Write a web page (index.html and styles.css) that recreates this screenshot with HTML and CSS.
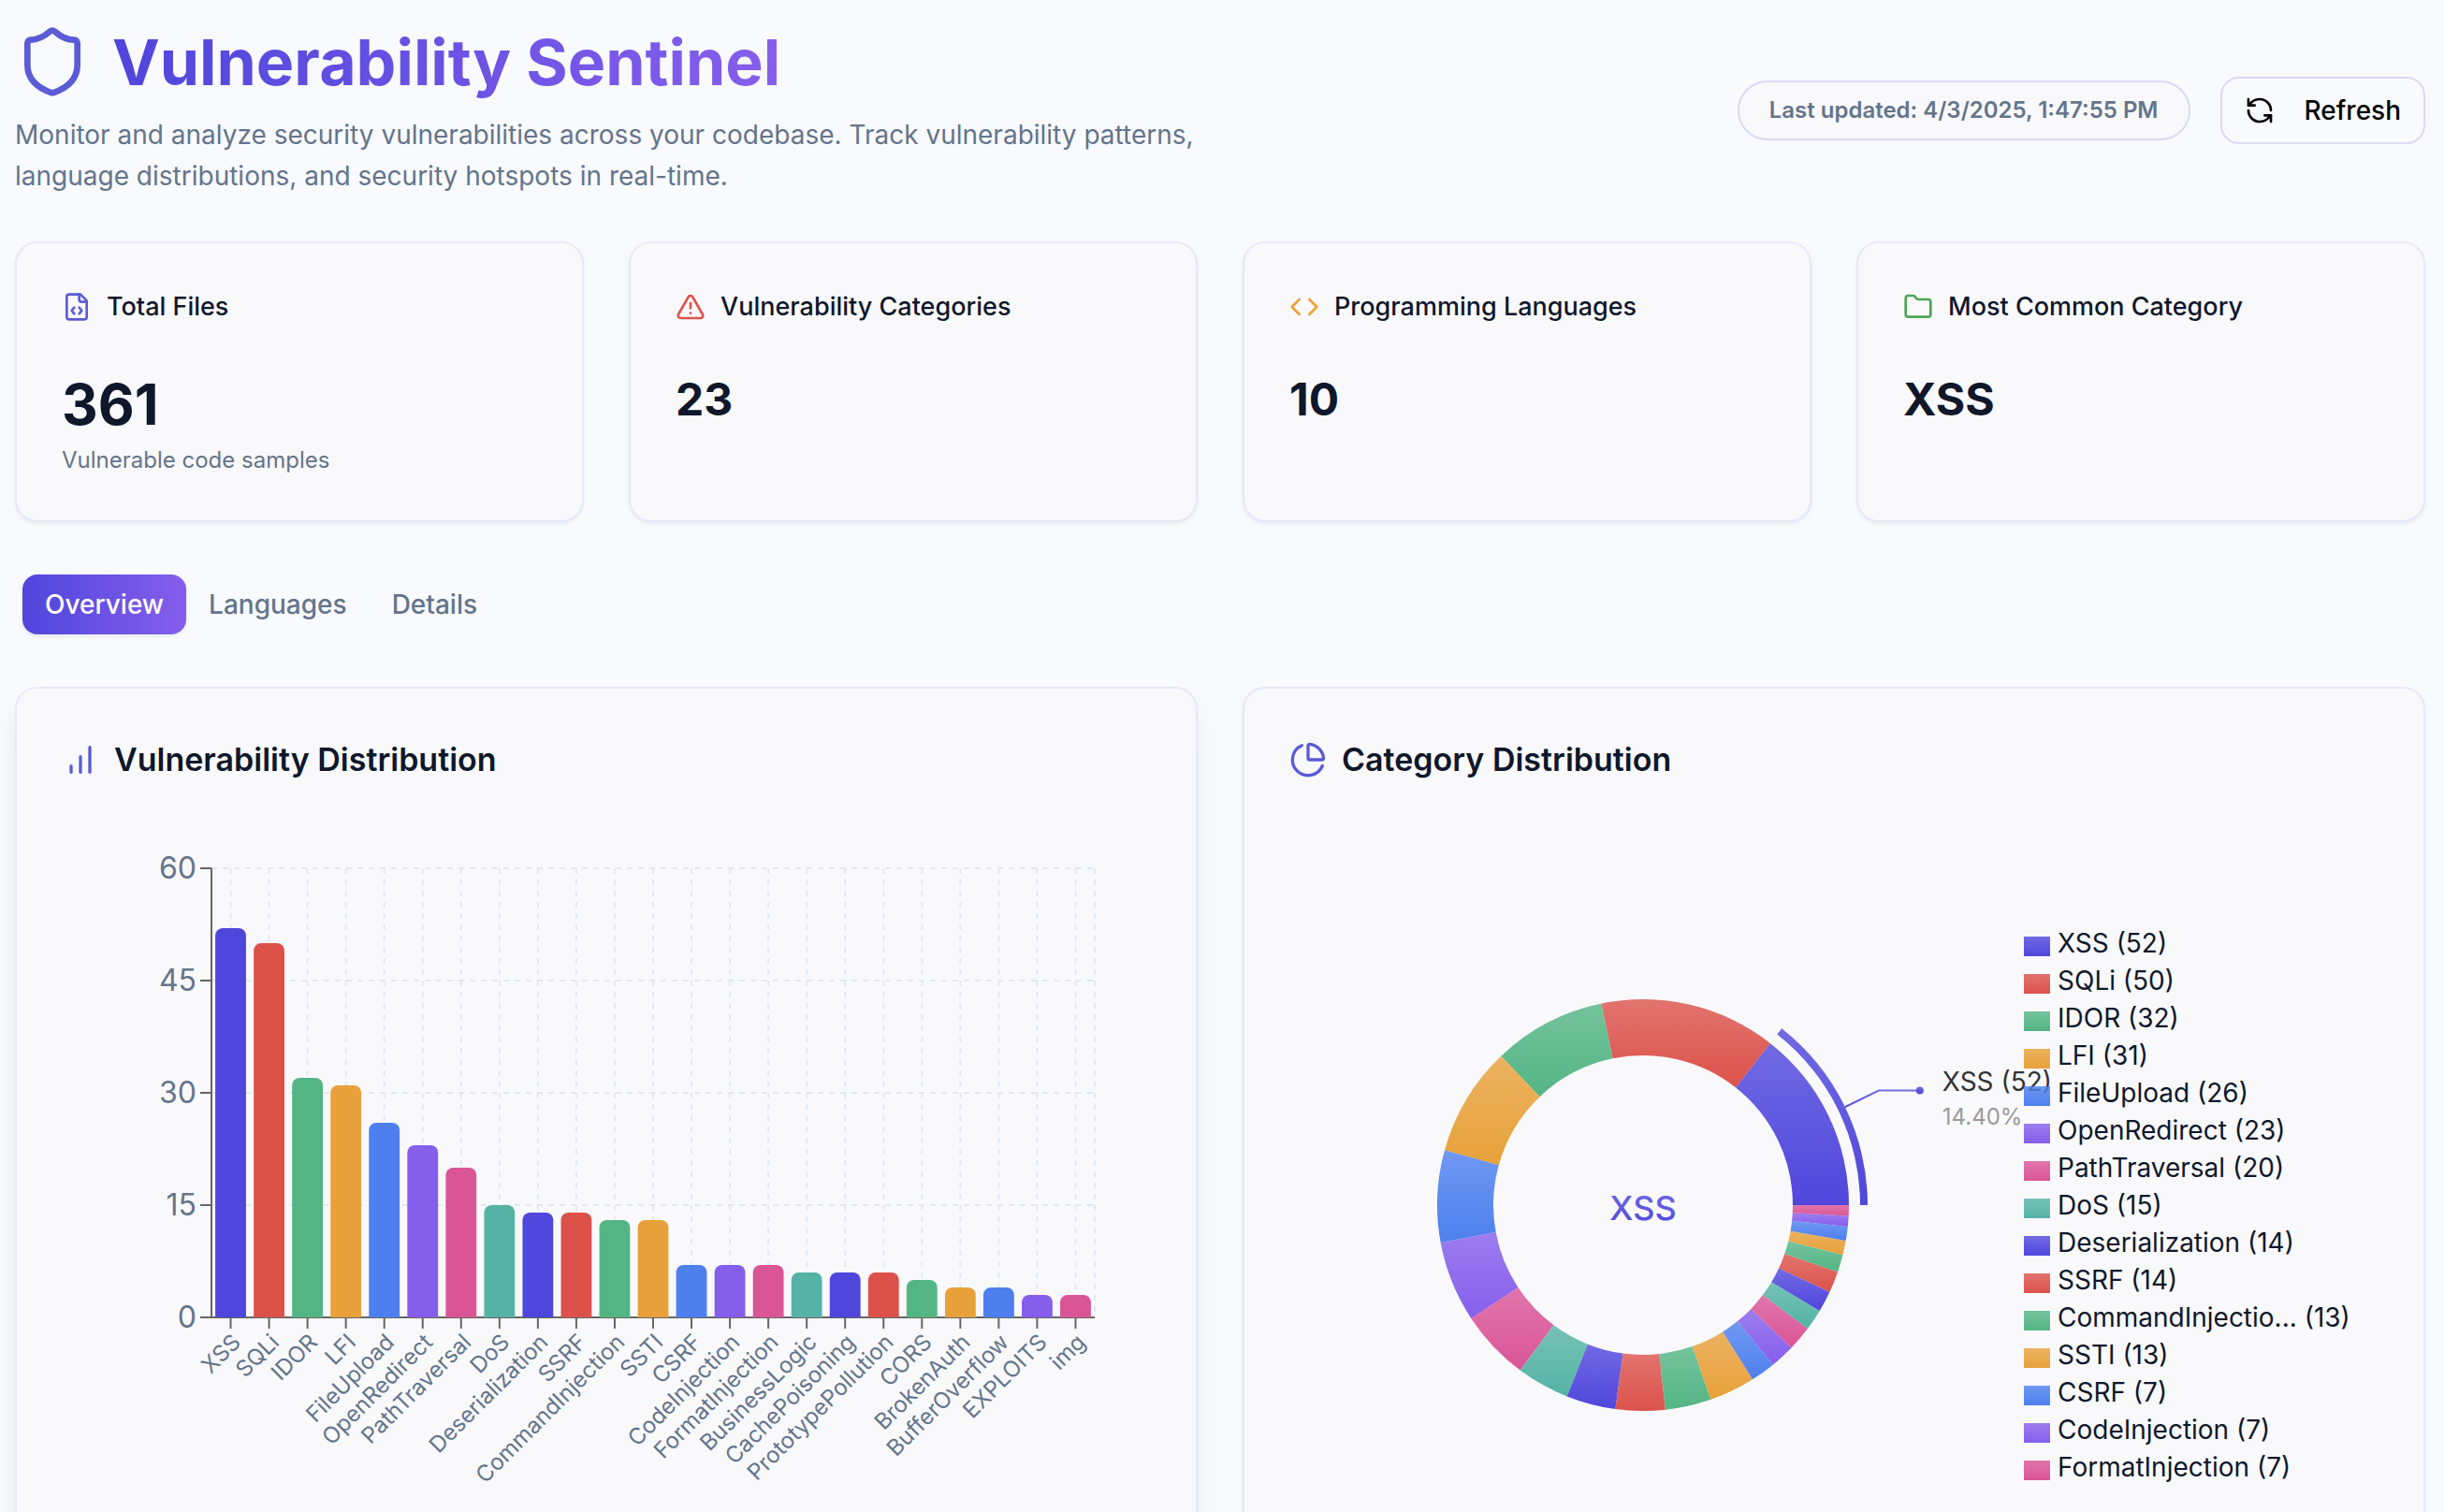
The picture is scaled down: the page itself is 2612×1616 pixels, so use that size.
FILE: index.html
```html
<!DOCTYPE html>
<html lang="en">
<head>
<meta charset="utf-8">
<meta name="viewport" content="width=device-width, initial-scale=1">
<title>Vulnerability Sentinel</title>
<link rel="stylesheet" href="styles.css">
</head>
<body>
<main class="page">
  <header class="masthead">
    <div class="intro">
      <div class="brand">
        <svg class="icon icon-xl indigo" viewBox="0 0 24 24" aria-hidden="true"><path d="M20 13c0 5-3.500 7.500-7.660 8.950a1 1 0 0 1-.670-.010C7.500 20.500 4 18 4 13V6a1 1 0 0 1 1-1c2 0 4.500-1.200 6.240-2.720a1.170 1.170 0 0 1 1.520 0C14.510 3.810 17 5 19 5a1 1 0 0 1 1 1z"/></svg>
        <h1 class="title">Vulnerability Sentinel</h1>
      </div>
      <p class="lead">Monitor and analyze security vulnerabilities across your codebase. Track vulnerability patterns, language distributions, and security hotspots in real-time.</p>
    </div>
    <div class="actions">
      <span class="updated">Last updated: 4/3/2025, 1:47:55 PM</span>
      <button class="refresh" type="button">
        <svg class="icon icon-md" viewBox="0 0 24 24" aria-hidden="true"><path d="M21 12a9 9 0 0 0-9-9 9.750 9.750 0 0 0-6.740 2.740L3 8"/><path d="M3 3v5h5"/><path d="M3 12a9 9 0 0 0 9 9 9.750 9.750 0 0 0 6.740-2.740L21 16"/><path d="M16 16h5v5"/></svg>
        Refresh
      </button>
    </div>
  </header>

  <section class="stats" aria-label="Summary">
    <article class="card">
      <h2 class="stat-title">
        <svg class="icon icon-md indigo" viewBox="0 0 24 24" aria-hidden="true"><path d="M10 12.500 8 15l2 2.500"/><path d="m14 12.500 2 2.500-2 2.500"/><path d="M14 2v4a2 2 0 0 0 2 2h4"/><path d="M15 2H6a2 2 0 0 0-2 2v16a2 2 0 0 0 2 2h12a2 2 0 0 0 2-2V7z"/></svg>
        Total Files
      </h2>
      <p class="stat-value stat-value-lg">361</p>
      <p class="stat-note">Vulnerable code samples</p>
    </article>
    <article class="card">
      <h2 class="stat-title">
        <svg class="icon icon-md red" viewBox="0 0 24 24" aria-hidden="true"><path d="m21.730 18-8-14a2 2 0 0 0-3.480 0l-8 14A2 2 0 0 0 4 21h16a2 2 0 0 0 1.730-3"/><path d="M12 9v4"/><path d="M12 17h.01"/></svg>
        Vulnerability Categories
      </h2>
      <p class="stat-value">23</p>
    </article>
    <article class="card">
      <h2 class="stat-title">
        <svg class="icon icon-md amber" viewBox="0 0 24 24" aria-hidden="true"><path d="m16 18 6-6-6-6"/><path d="m8 6-6 6 6 6"/></svg>
        Programming Languages
      </h2>
      <p class="stat-value">10</p>
    </article>
    <article class="card">
      <h2 class="stat-title">
        <svg class="icon icon-md green" viewBox="0 0 24 24" aria-hidden="true"><path d="M20 20a2 2 0 0 0 2-2V8a2 2 0 0 0-2-2h-7.900a2 2 0 0 1-1.690-.900L9.600 3.900A2 2 0 0 0 7.930 3H4a2 2 0 0 0-2 2v13a2 2 0 0 0 2 2Z"/></svg>
        Most Common Category
      </h2>
      <p class="stat-value">XSS</p>
    </article>
  </section>

  <div class="tabs" role="tablist">
    <button class="tab tab-active" type="button" role="tab" aria-selected="true">Overview</button>
    <button class="tab" type="button" role="tab" aria-selected="false">Languages</button>
    <button class="tab" type="button" role="tab" aria-selected="false">Details</button>
  </div>

  <section class="charts" aria-label="Charts">
    <article class="card card-raised">
      <h2 class="chart-title">
        <svg class="icon icon-lg indigo" viewBox="0 0 24 24" aria-hidden="true"><path d="M12 20V10"/><path d="M18 20V4"/><path d="M6 20v-4"/></svg>
        Vulnerability Distribution
      </h2>
      <svg class="plot" id="bars" viewBox="0 0 1164 800" role="img" aria-label="Files per vulnerability category"></svg>
    </article>
    <article class="card">
      <h2 class="chart-title">
        <svg class="icon icon-lg indigo" viewBox="0 0 24 24" aria-hidden="true"><path d="M21 12c.552 0 1.005-.449.950-.998a10 10 0 0 0-8.953-8.951c-.550-.055-.998.398-.998.950v8a1 1 0 0 0 1 1z"/><path d="M21.210 15.890A10 10 0 1 1 8 2.830"/></svg>
        Category Distribution
      </h2>
      <div class="pie-layout">
        <svg class="plot" id="pie" viewBox="0 0 785 800" role="img" aria-label="Share of each vulnerability category"></svg>
        <ul class="legend">
          <li class="legend-item"><span class="swatch c0"></span>XSS (52)</li>
          <li class="legend-item"><span class="swatch c1"></span>SQLi (50)</li>
          <li class="legend-item"><span class="swatch c2"></span>IDOR (32)</li>
          <li class="legend-item"><span class="swatch c3"></span>LFI (31)</li>
          <li class="legend-item"><span class="swatch c4"></span>FileUpload (26)</li>
          <li class="legend-item"><span class="swatch c5"></span>OpenRedirect (23)</li>
          <li class="legend-item"><span class="swatch c6"></span>PathTraversal (20)</li>
          <li class="legend-item"><span class="swatch c7"></span>DoS (15)</li>
          <li class="legend-item"><span class="swatch c0"></span>Deserialization (14)</li>
          <li class="legend-item"><span class="swatch c1"></span>SSRF (14)</li>
          <li class="legend-item"><span class="swatch c2"></span>CommandInjectio... (13)</li>
          <li class="legend-item"><span class="swatch c3"></span>SSTI (13)</li>
          <li class="legend-item"><span class="swatch c4"></span>CSRF (7)</li>
          <li class="legend-item"><span class="swatch c5"></span>CodeInjection (7)</li>
          <li class="legend-item"><span class="swatch c6"></span>FormatInjection (7)</li>
        </ul>
      </div>
    </article>
  </section>
</main>
<script src="charts.js"></script>
</body>
</html>
```
FILE: styles.css
```css
:root {
  --ink: #0f172a;
  --muted: #64748b;
  --line: #e9e8f8;
  --line-strong: #dadaf5;
  --panel: #f9f9fc;
  --indigo: #4f46dc;
  --red: #dc524b;
  --green: #54b584;
  --amber: #e8a13a;
  --blue: #4d80ee;
  --violet: #865eec;
  --pink: #da5596;
  --teal: #55b3a5;
}

* { box-sizing: border-box; margin: 0; padding: 0; }

html { scrollbar-width: none; }

body {
  background: #f8fafd;
  color: var(--ink);
  font-family: Inter, "Liberation Sans", sans-serif;
  font-size: 28px;
  line-height: 40px;
}

button { font: inherit; color: inherit; border: 0; background: none; cursor: pointer; }
h1, h2 { font-size: inherit; font-weight: inherit; }

.page {
  display: flex;
  flex-direction: column;
  gap: 48px;
  padding: 26px 20px 48px 16px;
}

.icon {
  flex: none;
  fill: none;
  stroke: currentColor;
  stroke-width: 2;
  stroke-linecap: round;
  stroke-linejoin: round;
}
.icon-md { width: 32px; height: 32px; }
.icon-lg { width: 40px; height: 40px; }
.icon-xl { width: 80px; height: 80px; }
.indigo { color: #5b5bd6; }
.red { color: #e0524c; }
.amber { color: #eda136; }
.green { color: #4ea555; }

.masthead { display: flex; align-items: center; justify-content: space-between; gap: 48px; }
.intro { display: flex; flex-direction: column; gap: 16px; }
.brand { display: flex; align-items: center; gap: 24px; }
.title {
  font-size: 68px;
  font-weight: 700;
  line-height: 80px;
  color: transparent;
  background: linear-gradient(90deg, var(--indigo), var(--violet));
  background-clip: text;
  -webkit-background-clip: text;
}
.lead { max-width: 1344px; color: var(--muted); line-height: 44px; }

.actions { display: flex; align-items: center; gap: 32px; flex: none; }
.updated {
  padding: 14px 32px;
  border: 2px solid var(--line-strong);
  border-radius: 32px;
  background: var(--panel);
  color: var(--muted);
  font-size: 24px;
  font-weight: 600;
  line-height: 32px;
}
.refresh {
  display: flex;
  align-items: center;
  gap: 32px;
  padding: 14px 24px;
  border: 2px solid var(--line-strong);
  border-radius: 20px;
  color: #000;
  font-weight: 500;
}

.card {
  min-width: 0;
  padding: 48px;
  border: 2px solid var(--line);
  border-radius: 24px;
  background: var(--panel);
  box-shadow: 0 2px 4px rgba(15, 23, 42, 0.06);
}
.card-raised { box-shadow: 0 20px 30px -6px rgba(15, 23, 42, 0.1), 0 8px 12px -8px rgba(15, 23, 42, 0.1); }

.stats { display: grid; grid-template-columns: repeat(4, minmax(0, 1fr)); gap: 48px; }
.stat-title { display: flex; align-items: center; gap: 16px; font-size: 27px; font-weight: 500; }
.stat-value { margin-top: 48px; font-size: 48px; font-weight: 700; line-height: 62px; }
.stat-value-lg { font-size: 60px; line-height: 72px; }
.stat-note { margin-top: 8px; color: var(--muted); font-size: 24px; line-height: 32px; }

.tabs { display: flex; padding: 8px; }
.tab { padding: 12px 24px; border-radius: 16px; color: var(--muted); font-weight: 500; }
.tab-active {
  color: #fff;
  background: linear-gradient(90deg, var(--indigo), var(--violet));
  box-shadow: 0 2px 4px rgba(15, 23, 42, 0.08);
}

.charts { display: grid; grid-template-columns: repeat(2, minmax(0, 1fr)); gap: 48px; }
.chart-title { display: flex; align-items: center; gap: 16px; font-size: 34px; font-weight: 600; line-height: 56px; }
.plot { display: block; width: 100%; overflow: visible; }
.card > .plot, .pie-layout { margin-top: 48px; }

.pie-layout { display: grid; grid-template-columns: minmax(0, 1fr) 379px; align-items: center; }
.legend { position: relative; list-style: none; }
.legend-item { display: flex; align-items: flex-start; gap: 8px; white-space: nowrap; }
.swatch {
  width: 28px;
  height: 21px;
  margin-top: 13px;
  background: linear-gradient(color-mix(in srgb, var(--tone) 80%, transparent), var(--tone));
}
.c0 { --tone: var(--indigo); }
.c1 { --tone: var(--red); }
.c2 { --tone: var(--green); }
.c3 { --tone: var(--amber); }
.c4 { --tone: var(--blue); }
.c5 { --tone: var(--violet); }
.c6 { --tone: var(--pink); }
.c7 { --tone: var(--teal); }

.bar { fill: var(--tone); }
.stop { stop-color: var(--tone); }
.grid-line { stroke: #e2e8f0; stroke-width: 2; stroke-dasharray: 6 6; }
.axis-line { stroke: #666; stroke-width: 2; }
.tick-y { fill: var(--muted); font-size: 32px; text-anchor: end; }
.tick-x { fill: var(--muted); font-size: 24px; text-anchor: end; }
.pie-center { font-size: 36px; font-weight: 500; text-anchor: middle; }
.callout-line { fill: none; stroke-width: 2; }
.callout-name { fill: #333; }
.callout-share { fill: #999; font-size: 24px; }
```
FILE: charts.js
```js
const data = [
  ["XSS", 52], ["SQLi", 50], ["IDOR", 32], ["LFI", 31], ["FileUpload", 26],
  ["OpenRedirect", 23], ["PathTraversal", 20], ["DoS", 15], ["Deserialization", 14],
  ["SSRF", 14], ["CommandInjection", 13], ["SSTI", 13], ["CSRF", 7],
  ["CodeInjection", 7], ["FormatInjection", 7], ["BusinessLogic", 6],
  ["CachePoisoning", 6], ["PrototypePollution", 6], ["CORS", 5], ["BrokenAuth", 4],
  ["BufferOverflow", 4], ["EXPLOITS", 3], ["img", 3]
];
const TONES = 8;

function add(parent, name, attrs, text) {
  const node = document.createElementNS("http://www.w3.org/2000/svg", name);
  for (const key in attrs) node.setAttribute(key, attrs[key]);
  if (text !== undefined) node.textContent = text;
  parent.appendChild(node);
  return node;
}

function drawBars(svg) {
  const left = 160, right = 1104, top = 40, bottom = 520, max = 60;
  const band = (right - left) / data.length;
  const width = band * 0.8;
  const line = (cls, x1, y1, x2, y2) => add(svg, "line", { class: cls, x1, y1, x2, y2 });
  const scale = v => bottom - (v / max) * (bottom - top);

  for (let v = 0; v <= max; v += 15) line("grid-line", left, scale(v), right, scale(v));
  data.forEach((_, i) => line("grid-line", left + band * (i + 0.5), top, left + band * (i + 0.5), bottom));
  line("grid-line", right, top, right, bottom);

  line("axis-line", left, bottom, right, bottom);
  line("axis-line", left, top, left, bottom);
  for (let v = 0; v <= max; v += 15) {
    line("axis-line", left - 12, scale(v), left, scale(v));
    add(svg, "text", { class: "tick-y", x: left - 16, y: scale(v), dy: "0.355em" }, v);
  }

  data.forEach(([name, value], i) => {
    const mid = left + band * (i + 0.5);
    const x = left + band * (i + 0.1);
    const y = scale(value);
    line("axis-line", mid, bottom, mid, bottom + 12);
    add(svg, "path", {
      class: "bar c" + (i % TONES),
      d: `M${x} ${bottom}V${y + 8}a8 8 0 0 1 8-8h${width - 16}a8 8 0 0 1 8 8V${bottom}z`
    });
    add(svg, "text", {
      class: "tick-x", x: mid, y: bottom + 16, dy: "0.71em",
      transform: `rotate(-45 ${mid} ${bottom + 16})`
    }, name);
  });
}

function drawPie(svg) {
  const cx = 378, cy = 400;
  const total = data.reduce((sum, d) => sum + d[1], 0);
  const defs = add(svg, "defs", {});
  for (let i = 0; i < TONES; i++) {
    const g = add(defs, "linearGradient", { id: "tone" + i, x1: 0, y1: 0, x2: 0, y2: 1 });
    add(g, "stop", { class: "stop c" + i, offset: 0, "stop-opacity": 0.8 });
    add(g, "stop", { class: "stop c" + i, offset: 1 });
  }
  const at = (r, a) => `${cx + r * Math.cos(a)} ${cy - r * Math.sin(a)}`;
  const ring = (r0, r1, a0, a1) =>
    `M${at(r1, a0)}A${r1} ${r1} 0 0 0 ${at(r1, a1)}L${at(r0, a1)}A${r0} ${r0} 0 0 1 ${at(r0, a0)}z`;

  let angle = 0;
  data.forEach(([name, value], i) => {
    const next = angle + (value / total) * 2 * Math.PI;
    const fill = `url(#tone${i % TONES})`;
    add(svg, "path", { d: ring(160, 220, angle, next), fill });
    if (i === 0) {
      const mid = next / 2;
      const ex = cx + 280 * Math.cos(mid) + 44, ey = cy - 280 * Math.sin(mid);
      add(svg, "path", { d: ring(232, 240, angle, next), fill });
      add(svg, "path", { class: "callout-line", stroke: fill, d: `M${at(240, mid)}L${at(280, mid)}H${ex}` });
      add(svg, "circle", { cx: ex, cy: ey, r: 4, fill });
      add(svg, "text", { class: "pie-center", x: cx, y: cy + 16, fill }, name);
      add(svg, "text", { class: "callout-name", x: ex + 24, y: ey }, `${name} (${value})`);
      add(svg, "text", { class: "callout-share", x: ex + 24, y: ey + 36 }, `${(100 * value / total).toFixed(2)}%`);
    }
    angle = next;
  });
}

drawBars(document.getElementById("bars"));
drawPie(document.getElementById("pie"));
```
